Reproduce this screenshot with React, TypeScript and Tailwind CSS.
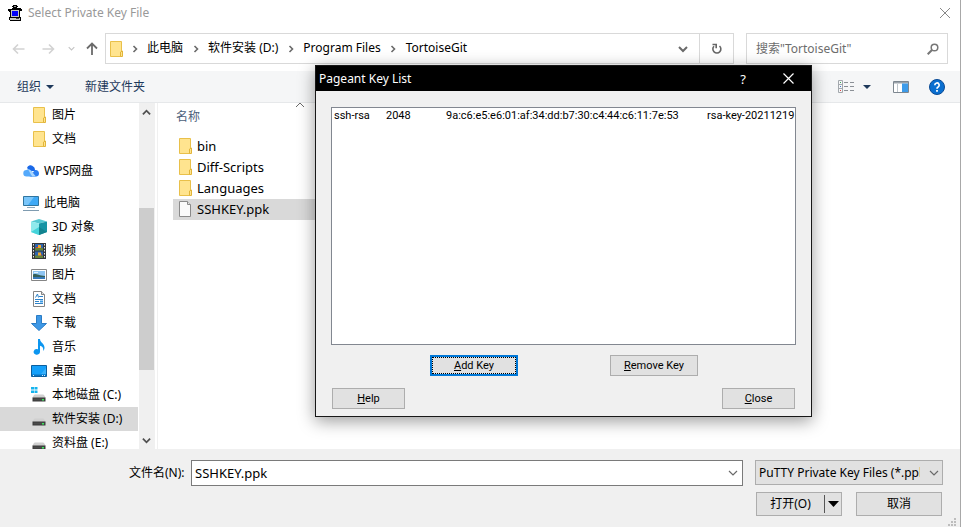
import type { ReactNode } from 'react';

const uiFont = "font-['Noto_Sans','Noto_Sans_CJK_SC',sans-serif]";
const dialogFont = "font-['Roboto','Liberation_Sans',sans-serif]";

function FolderIcon() {
  return (
    <svg width="16" height="16" viewBox="0 0 16 16" className="shrink-0" aria-hidden="true">
      <path d="M2.500 .5h11v15h-11z" fill="#ffe48f" stroke="#e9c04a" />
      <path d="M12.500 15.500v-4.500l2-1v5.500z" fill="#ffe48f" stroke="#e2b53a" />
    </svg>
  );
}

function FileIcon() {
  return (
    <svg width="16" height="16" viewBox="0 0 16 16" className="shrink-0" aria-hidden="true">
      <path d="M2.500 .5h8l3 3v12h-11z" fill="#fafafa" stroke="#8a8a8a" />
      <path d="M10.500 .5v3h3" fill="#e4e4e4" stroke="#8a8a8a" />
    </svg>
  );
}

function PuttyIcon() {
  return (
    <svg width="16" height="16" viewBox="0 0 16 16" aria-hidden="true" shapeRendering="crispEdges">
      <path d="M6 0h4v1h1v1h-1v1h4v1h1v2h-2v6h1v4h-11v-1h-1v-3h1v-5h-1v-1h-1v-2h4v-1h1v-1h-1z" fill="#000" />
      <path d="M7 1h2v1h-2z" fill="#9c9c9c" />
      <path d="M4 5h8v7h-8z" fill="#c3c3c3" />
      <path d="M5 6h6v5h-6z" fill="#0000fa" />
      <path d="M3 13h10v2h-10z" fill="#c8c8c8" />
      <path d="M9 13h3v1h-3z" fill="#444" />
    </svg>
  );
}

function CloudIcon() {
  return (
    <svg width="16" height="16" viewBox="0 0 16 16" aria-hidden="true">
      <path d="M4 5a3.600 3.600 0 0 1 6.500-1.200c1.500 1 1.500 2.700 1.500 4.200h-6c-.3-1.200-1-2.200-2-3z" fill="#1a68e8" />
      <path d="M3.500 13.500a3.200 3.200 0 0 1 0-6.400 3 3 0 0 1 2.300-.8c3 .3 4.500 5 7.700 7.200z" fill="#54a9fb" />
      <path d="M6 13.500c3 0 3.500-4 5.500-6.300 2.500-.8 4.500.8 4.500 3.300a3 3 0 0 1-3 3z" fill="#2b7ff2" />
      <path d="M5 6.200c2 0 4.500 2.500 6 5l2 2.300h-4z" fill="#a8d5ff" />
    </svg>
  );
}

function ComputerIcon() {
  return (
    <svg width="16" height="16" viewBox="0 0 16 16" aria-hidden="true">
      <path d="M.5 1.500h15v9h-15z" fill="#3fa9f5" stroke="#30759f" />
      <path d="M1 2h10l-6 8h-4z" fill="#7ac6fa" />
      <path d="M4 12.500h8" stroke="#8fa9bb" />
      <path d="M0 15.500h16" stroke="#7f9bb0" />
    </svg>
  );
}

function CubeIcon() {
  return (
    <svg width="16" height="16" viewBox="0 0 16 16" aria-hidden="true">
      <path d="M0 2.500 8 0l8 2.500-8 2z" fill="#55c9d2" />
      <path d="M0 2.500l8 2v11.500l-8-3z" fill="#8fe9ec" />
      <path d="M16 2.500l-8 2v11.500l8-3z" fill="#1694a4" />
      <path d="M0 13l8-5v8z" fill="#45d3da" />
      <path d="M16 13l-8-5v8z" fill="#13838f" />
    </svg>
  );
}

function VideoIcon() {
  return (
    <svg width="16" height="16" viewBox="0 0 16 16" aria-hidden="true">
      <path d="M1 0h14v16h-14z" fill="#33373b" />
      <path d="M4 1h8v6.500h-8zM4 8.500h8v6.500h-8z" fill="#2d64b0" />
      <path d="M2.500 1v14M13.500 1v14" stroke="#e6e6e6" strokeDasharray="1.500 1.500" />
      <path d="M4 5h8v2.500h-8zM4 12.500h8v2.500h-8z" fill="#65833a" />
      <path d="M7 2h3v3h-3zM7 9.500h3v3h-3z" fill="#f0a72a" />
      <path d="M5 4h2v1h-2zM10 11.500h1v1h-1z" fill="#da3f2b" />
    </svg>
  );
}

function PictureIcon() {
  return (
    <svg width="16" height="16" viewBox="0 0 16 16" aria-hidden="true">
      <path d="M.5 2.500h15v11h-15z" fill="#fff" stroke="#858585" />
      <path d="M2 4h12v8h-12z" fill="#8fc5f2" />
      <path d="M2 7.500c3-1.500 5 1 12 1.500v1h-12z" fill="#35605a" />
      <path d="M2 10h12v2h-12z" fill="#3779b9" />
      <path d="M3 5h4v1h-4z" fill="#e4f3fd" />
    </svg>
  );
}

function DocumentIcon() {
  return (
    <svg width="16" height="16" viewBox="0 0 16 16" aria-hidden="true">
      <path d="M2.500 .5h8l3 3v12h-11z" fill="#fff" stroke="#858585" />
      <path d="M10.500 .5v3h3" fill="#ddd" stroke="#858585" />
      <path d="M4.500 6.500 6.500 3l1 3.500M8 5.500h4M4 8.500h8M4 10.500h4M4 12.500h8" fill="none" stroke="#2e83c9" />
      <path d="M9 9.500h3v2h-3z" fill="#3f9be4" />
    </svg>
  );
}

function DownloadIcon() {
  return (
    <svg width="16" height="16" viewBox="0 0 16 16" aria-hidden="true">
      <path d="M5.500 .5h5v8h5l-7.500 7-7.500-7h5z" fill="#3e98e6" stroke="#2b7cc5" />
    </svg>
  );
}

function MusicIcon() {
  return (
    <svg width="16" height="16" viewBox="0 0 16 16" aria-hidden="true">
      <path d="M7 0h2c0 3.500 4.500 4.500 4.500 8.500 0 1.500-.5 2.500-1.500 3.500.8-3-.5-4.500-3-5.300v6.300a3.200 2.800 0 1 1-2-2.700z" fill="#0c96f0" />
    </svg>
  );
}

function DesktopIcon() {
  return (
    <svg width="16" height="16" viewBox="0 0 16 16" aria-hidden="true">
      <path d="M.5 2.500h15v11h-15z" fill="#14a0fa" stroke="#0c5f9e" />
      <path d="M1 11.500h14v1.500h-14z" fill="#0b73bf" />
      <path d="M2 12.500h1M11 12.500h1M13 12.500h1" stroke="#d9f0ff" />
      <path d="M10 11l5-6v6z" fill="#3bb2fb" />
    </svg>
  );
}

function DriveIcon({ system = false }: { system?: boolean }) {
  return (
    <svg width="16" height="16" viewBox="0 0 16 16" aria-hidden="true">
      <path d="M4 7.500h8q1.500 0 2.500 3.500h-13q1-3.500 2.500-3.500z" fill="#d0d0d0" />
      <path d="M1.500 10.500h13v4h-13z" fill="#3a3a3a" />
      <path d="M2.500 11.500h11v2h-11z" fill="#4b4b4b" />
      <path d="M11 12h2v1.500h-2z" fill="#3be55b" />
      {system && <path d="M0 0h3v2.500h-3zM3.500 0h3v2.500h-3zM0 3.500h3v2.500h-3zM3.500 3.500h3v2.500h-3z" fill="#16b4ee" />}
    </svg>
  );
}

function Chevron({ d, size = 10, color = '#6a6a6a', width = 1.6 }: { d: string; size?: number; color?: string; width?: number }) {
  return (
    <svg width={size} height={size} viewBox="0 0 10 10" fill="none" stroke={color} strokeWidth={width} aria-hidden="true">
      <path d={d} />
    </svg>
  );
}

const right = 'M3.500 2l3 3-3 3';
const down = 'M1 3l4 4 4-4';
const up = 'M1 7l4-4 4 4';

function Triangle({ color }: { color: string }) {
  return (
    <svg width="8" height="4" viewBox="0 0 8 4" aria-hidden="true">
      <path d="M0 0h8L4 4z" fill={color} />
    </svg>
  );
}

function TreeItem({ icon, label, level = 2, selected = false }: { icon: ReactNode; label: string; level?: number; selected?: boolean }) {
  return (
    <li>
      <button
        className={`flex h-6 w-full items-center gap-[5px] whitespace-nowrap text-left ${level === 1 ? 'pl-[23px]' : 'pl-[31px]'} ${selected ? 'bg-[#d9d9d9]' : ''}`}
      >
        {icon}
        {label}
      </button>
    </li>
  );
}

function Sidebar() {
  return (
    <div className="flex w-[155px] shrink-0">
      <nav className="min-w-0 flex-1 overflow-hidden" aria-label="导航窗格">
        <ul>
          <TreeItem icon={<FolderIcon />} label="图片" />
          <TreeItem icon={<FolderIcon />} label="文档" />
        </ul>
        <ul className="my-2">
          <TreeItem level={1} icon={<CloudIcon />} label="WPS网盘" />
        </ul>
        <ul>
          <TreeItem level={1} icon={<ComputerIcon />} label="此电脑" />
          <TreeItem icon={<CubeIcon />} label="3D 对象" />
          <TreeItem icon={<VideoIcon />} label="视频" />
          <TreeItem icon={<PictureIcon />} label="图片" />
          <TreeItem icon={<DocumentIcon />} label="文档" />
          <TreeItem icon={<DownloadIcon />} label="下载" />
          <TreeItem icon={<MusicIcon />} label="音乐" />
          <TreeItem icon={<DesktopIcon />} label="桌面" />
          <TreeItem icon={<DriveIcon system />} label="本地磁盘 (C:)" />
          <TreeItem icon={<DriveIcon />} label="软件安装 (D:)" selected />
          <TreeItem icon={<DriveIcon />} label="资料盘 (E:)" />
        </ul>
      </nav>
      <div className="ml-px flex w-4 flex-col bg-[#f0f0f0]">
        <button aria-label="向上滚动" className="flex h-[18px] items-center justify-center pr-px">
          <Chevron d={up} size={9} color="#505050" width={2} />
        </button>
        <div className="flex flex-1 flex-col">
          <div className="flex-[87]" />
          <div className="mr-px flex-[162] bg-[#cdcdcd]" />
          <div className="flex-[61]" />
        </div>
        <button aria-label="向下滚动" className="flex h-[18px] items-center justify-center pr-px">
          <Chevron d={down} size={9} color="#505050" width={2} />
        </button>
      </div>
    </div>
  );
}

const files = [
  { name: 'bin', folder: true },
  { name: 'Diff-Scripts', folder: true },
  { name: 'Languages', folder: true },
  { name: 'SSHKEY.ppk', folder: false },
];

function FileList() {
  return (
    <div className="ml-0.5 min-w-0 flex-1 border-l border-[#f0f0f0] pl-[15px]">
      <div className="flex w-[255px] flex-col">
        <button className="relative flex h-[33px] items-center pb-1.5 pl-[3px] text-left text-[#4c607a]">
          名称
          <span className="absolute left-[122px] top-[-3px]">
            <Chevron d={up} size={10} width={1} />
          </span>
        </button>
        <ul>
          {files.map((file) => (
            <li key={file.name}>
              <button className={`flex h-[21px] w-full items-center gap-1 pb-0.5 pl-1 text-left text-[13px] ${file.folder ? '' : 'bg-[#d9d9d9]'}`}>
                {file.folder ? <FolderIcon /> : <FileIcon />}
                {file.name}
              </button>
            </li>
          ))}
        </ul>
      </div>
    </div>
  );
}

function AddressBar() {
  const crumbs = ['此电脑', '软件安装 (D:)', 'Program Files', 'TortoiseGit'];
  return (
    <div className="flex h-[31px] px-3">
      <div className="flex w-[93px] shrink-0 items-center">
        <button aria-label="后退" className="w-[30px]">
          <svg width="13" height="12" viewBox="0 0 13 12" fill="none" stroke="#d2d2d2" strokeWidth="1.600" aria-hidden="true"><path d="M12.500 6h-11M6 1.500L1.500 6l4.500 4.500" /></svg>
        </button>
        <button aria-label="前进" className="w-[26px]">
          <svg width="13" height="12" viewBox="0 0 13 12" fill="none" stroke="#d2d2d2" strokeWidth="1.600" aria-hidden="true"><path d="M.5 6h11M7 1.500l4.500 4.500-4.500 4.500" /></svg>
        </button>
        <button aria-label="最近浏览的位置" className="w-[18px]">
          <Chevron d={down} size={7} color="#c4c4c4" />
        </button>
        <button aria-label="上移">
          <svg width="12" height="13" viewBox="0 0 12 13" fill="none" stroke="#6b6b6b" strokeWidth="1.800" aria-hidden="true"><path d="M6 13V2M1 6.500l5-5 5 5" /></svg>
        </button>
      </div>
      <div className="flex min-w-0 flex-1 border border-[#d9d9d9]">
        <div className="flex min-w-0 flex-1 items-center pl-0.5">
          <FolderIcon />
          <div className="-ml-0.5 flex">
            {crumbs.map((crumb) => (
              <span key={crumb} className="flex items-center whitespace-nowrap pb-0.5">
                <span className="flex w-[25px] justify-center pt-0.5"><Chevron d={right} /></span>
                <button>{crumb}</button>
              </span>
            ))}
          </div>
        </div>
        <button aria-label="以前的位置" className="flex w-8 items-center justify-center">
          <Chevron d={down} width={2} />
        </button>
        <button aria-label="刷新" className="flex w-[34px] items-center justify-center border-l border-[#d9d9d9]">
          <svg width="12" height="12" viewBox="0 0 12 12" fill="none" stroke="#666" strokeWidth="1.600" aria-hidden="true">
            <path d="M3 3.200a4 4 0 1 0 5.500-.2" />
            <path d="M1.500 1.500h3.700v3.700" />
          </svg>
        </button>
      </div>
      <label className="ml-3 flex w-[202px] shrink-0 items-center border border-[#d9d9d9] pl-[9px] pr-2">
        <input aria-label="搜索" placeholder={'搜索"TortoiseGit"'} className="min-w-0 flex-1 outline-none placeholder:text-[#6d6d6d]" />
        <svg width="12" height="12" viewBox="0 0 12 12" fill="none" stroke="#777" strokeWidth="1.500" aria-hidden="true">
          <circle cx="7.500" cy="4.500" r="3.300" />
          <path d="M5 7L.7 11.300" strokeWidth="2" />
        </svg>
      </label>
    </div>
  );
}

function Toolbar() {
  return (
    <div className="mt-[7px] flex h-8 items-center border-b border-[#e6e8ea] bg-[#f5f6f7] pl-[17px] pr-[15px] text-[#1e395b]">
      <button className="flex items-center gap-[5px]">组织 <Triangle color="#1e395b" /></button>
      <button className="ml-[31px]">新建文件夹</button>
      <div className="ml-auto flex items-center">
        <button aria-label="更改视图">
          <svg width="16" height="13" viewBox="0 0 16 13" fill="none" aria-hidden="true">
            <path d="M.5 .5h4v12h-4zM.5 4.500h4M.5 8.500h4" stroke="#a3a8ad" />
            <path d="M6 2.500h4M12 2.500h4M6 6.500h4M12 6.500h4M6 10.500h4M12 10.500h4" stroke="#8b9096" />
            <path d="M2 2.500h1" stroke="#39a45a" /><path d="M2 6.500h1" stroke="#3d79c9" /><path d="M2 10.500h1" stroke="#dd4545" />
          </svg>
        </button>
        <button aria-label="视图选项" className="ml-[9px]"><Triangle color="#1e395b" /></button>
        <button aria-label="显示预览窗格" className="ml-[22px]">
          <svg width="16" height="12" viewBox="0 0 16 12" fill="none" aria-hidden="true">
            <path d="M.5 .5h15v11h-15z" fill="#fff" stroke="#7d8790" />
            <path d="M1 1h14v1.500h-14z" fill="#9aa2aa" />
            <path d="M9 2.500h6v8.500h-6z" fill="#3d9be9" />
            <path d="M4.500 3v8" stroke="#bfc6cc" />
          </svg>
        </button>
        <button aria-label="获取帮助" className="ml-5">
          <svg width="16" height="16" viewBox="0 0 16 16" aria-hidden="true">
            <circle cx="8" cy="8" r="7.500" fill="#0a6fd0" stroke="#0b4b94" />
            <path d="M5.800 6.200a2.200 2.200 0 1 1 3.300 1.900q-1.100.6-1.100 1.700" fill="none" stroke="#fff" strokeWidth="1.700" />
            <path d="M7.100 11h1.800v1.800h-1.800z" fill="#fff" />
          </svg>
        </button>
      </div>
    </div>
  );
}

function Footer() {
  return (
    <footer className="relative flex h-[78px] gap-3 bg-[#f0f0f0] pl-[129px] pr-[17px] pt-[11px]">
      <div className="flex h-[26px] min-w-0 flex-1 items-center">
        <label htmlFor="filename" className="w-[62px] shrink-0 whitespace-nowrap">文件名(N):</label>
        <div className="flex h-full min-w-0 flex-1 items-center border border-[#7a7a7a] bg-white pl-[3px]">
          <input id="filename" defaultValue="SSHKEY.ppk" className="min-w-0 flex-1 text-[13px] outline-none" />
          <button aria-label="打开历史记录" className="flex w-[18px] justify-center">
            <Chevron d={down} width={1.2} />
          </button>
        </div>
      </div>
      <div className="flex w-[188px] shrink-0 flex-col gap-[7px]">
        <div className="grid h-[25px] items-center border border-[#adadad] bg-[#e1e1e1]">
          <select aria-label="文件类型" className="col-start-1 row-start-1 h-full w-[164px] appearance-none overflow-hidden pl-[3px] outline-none">
            <option>PuTTY Private Key Files (*.ppk)</option>
          </select>
          <span className="pointer-events-none col-start-1 row-start-1 mr-[3px] justify-self-end"><Chevron d={down} width={1.2} /></span>
        </div>
        <div className="flex h-6 justify-between px-px">
          <div className="flex w-[86px] items-center border border-[#adadad] bg-[#e1e1e1]">
            <button className="h-full flex-1 whitespace-nowrap">打开(O)</button>
            <button aria-label="打开选项" className="flex h-[18px] w-[17px] items-center justify-center border-l border-[#555]">
              <svg width="11" height="6" viewBox="0 0 11 6" aria-hidden="true"><path d="M0 0h11L5.500 6z" /></svg>
            </button>
          </div>
          <button className="w-[86px] border border-[#adadad] bg-[#e1e1e1]">取消</button>
        </div>
      </div>
      <svg width="11" height="9" viewBox="0 0 11 9" className="absolute bottom-0 right-px" aria-hidden="true">
        <path d="M6 0h2v2h-2zM3 3h2v2h-2zM6 3h2v2h-2zM0 6h2v2h-2zM3 6h2v2h-2zM6 6h2v2h-2z" fill="#bdbdbd" />
      </svg>
    </footer>
  );
}

function PushButton({ children, className }: { children: ReactNode; className: string }) {
  return <button className={`h-[21px] bg-[#e1e1e1] text-center ${className}`}>{children}</button>;
}

function KeyListDialog() {
  return (
    <section
      role="dialog"
      aria-label="Pageant Key List"
      className="absolute left-[315px] top-[65px] w-[497px] border border-[#181818] bg-[#f0f0f0] text-black shadow-[0_4px_16px_rgba(0,0,0,0.4)]"
    >
      <header className="flex h-[25px] items-center bg-black pl-[3px] pr-4 text-white">
        <h2 className="flex-1">Pageant Key List</h2>
        <button aria-label="Help topics" className="mr-9 text-[13px]">?</button>
        <button aria-label="Close window">
          <svg width="13" height="13" viewBox="0 0 13 13" fill="none" stroke="#fff" strokeWidth="1.200" aria-hidden="true"><path d="M1.500 1.500l10 10M11.500 1.500l-10 10" /></svg>
        </button>
      </header>
      <div className={`px-[15px] pb-[7px] pt-4 text-[11px] ${dialogFont}`}>
        <div className="h-[238px] overflow-hidden border border-[#828790] bg-white">
          <table className="w-full table-fixed whitespace-nowrap">
            <colgroup>
              <col className="w-[54px]" />
              <col className="w-[60px]" />
              <col className="w-[261px]" />
              <col />
            </colgroup>
            <tbody>
              <tr className="h-4">
                <td className="pl-0.5">ssh-rsa</td>
                <td>2048</td>
                <td>9a:c6:e5:e6:01:af:34:dd:b7:30:c4:44:c6:11:7e:53</td>
                <td>rsa-key-20211219</td>
              </tr>
            </tbody>
          </table>
        </div>
        <div className="mt-2.5 flex justify-between pl-[99px] pr-[98px]">
          <PushButton className="w-[88px] border-2 border-[#0078d7]">
            <span className="flex h-full items-center justify-center border border-dotted border-black"><span><u>A</u>dd Key</span></span>
          </PushButton>
          <PushButton className="w-[88px] border border-[#adadad]"><u>R</u>emove Key</PushButton>
        </div>
        <div className="mt-3 flex justify-between px-px">
          <PushButton className="w-[73px] border border-[#adadad]"><u>H</u>elp</PushButton>
          <PushButton className="w-[73px] border border-[#adadad]"><u>C</u>lose</PushButton>
        </div>
      </div>
    </section>
  );
}

export default function App() {
  return (
    <main className={`relative flex h-screen flex-col overflow-hidden border-r border-[#a8a8a8] bg-white text-[12px] leading-4 text-black ${uiFont}`}>
      <header className="flex h-[33px] shrink-0 items-center pb-[7px] pl-[7px] pr-[9px] text-[#999]">
        <PuttyIcon />
        <h1 className="ml-[5px] flex-1">Select Private Key File</h1>
        <button aria-label="关闭">
          <svg width="12" height="12" viewBox="0 0 12 12" fill="none" stroke="#888" aria-hidden="true"><path d="M1 1l10 10M11 1L1 11" /></svg>
        </button>
      </header>
      <AddressBar />
      <Toolbar />
      <div className="flex min-h-0 flex-1">
        <Sidebar />
        <FileList />
      </div>
      <Footer />
      <KeyListDialog />
    </main>
  );
}
